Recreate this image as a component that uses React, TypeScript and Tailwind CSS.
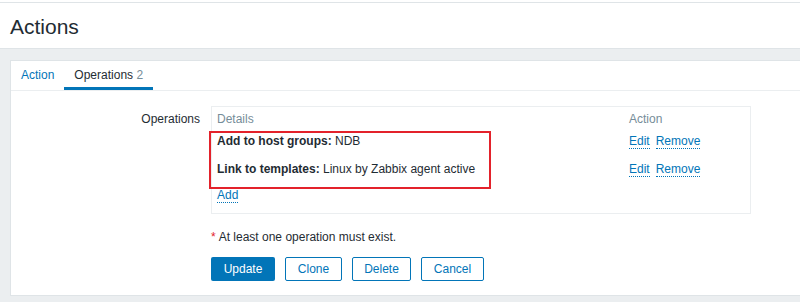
import React from "react";

const link = "text-[#0275b8] border-b border-dotted border-[#0275b8] leading-[14px] cursor-pointer";

function OpRow({ label, value, h }: { label: string; value: string; h: string }) {
  return (
    <div className={`flex items-center ${h}`}>
      <div className="w-[412px] shrink-0">
        <span className="font-bold">{label}:</span> {value}
      </div>
      <div className="flex gap-[6px]">
        <span className={link}>Edit</span>
        <span className={link}>Remove</span>
      </div>
    </div>
  );
}

export default function App() {
  return (
    <div
      className="w-[800px] h-[302px] overflow-hidden bg-[#ebeef0] text-[12px] text-[#1f2c33]"
      style={{ fontFamily: '"Liberation Sans", Arial, sans-serif' }}
    >
      <div className="h-[2px] bg-white" />
      <header className="h-[47px] bg-white border-t border-b border-[#dfe4e7] flex items-center pl-[10px]">
        <h1 className="text-[21px] leading-none text-[#1f2c33] font-normal mt-[1px]">Actions</h1>
      </header>
      <div className="ml-[10px] mt-[11px] w-[800px] h-[236px] bg-white border border-[#dfe4e7]">
        <div className="flex h-[30px] border-b border-[#ebeef0]">
          <div className="px-[10px] flex items-center text-[#0275b8] pb-[2px]">Action</div>
          <div className="px-[10px] flex items-center border-b-[3px] border-[#0275b8] pt-[1px]">
            Operations&nbsp;<span className="text-[#768d99]">2</span>
          </div>
        </div>
        <div className="flex mt-[15px]">
          <div className="w-[189px] shrink-0 text-right pt-[4px]">Operations</div>
          <div className="ml-[11px]">
            <div className="relative w-[540px] border border-[#ebeef0] pl-[5px] pt-[2px] pb-[8px]">
              <div className="flex items-center h-[20px] text-[#768d99]">
                <div className="w-[412px] shrink-0">Details</div>
                <div>Action</div>
              </div>
              <OpRow label="Add to host groups" value="NDB" h="h-[24px]" />
              <OpRow label="Link to templates" value="Linux by Zabbix agent active" h="h-[32px]" />
              <div className="flex items-center h-[20px]">
                <span className={link}>Add</span>
              </div>
              <div className="absolute left-[-3px] top-[24px] w-[282px] h-[58px] border-2 border-[#e3222b]" />
            </div>
            <div className="mt-[16px] flex items-center h-[14px]">
              <span className="text-[#e3222b] mr-[3px]">*</span>
              <span>At least one operation must exist.</span>
            </div>
            <div className="mt-[13px] flex gap-[10px]">
              <button className="w-[64px] h-[24px] bg-[#0275b8] text-white rounded-[2px] text-[12px]">Update</button>
              <button className="w-[57px] h-[24px] bg-white text-[#0275b8] border border-[#0275b8] rounded-[2px] text-[12px]">Clone</button>
              <button className="w-[59px] h-[24px] bg-white text-[#0275b8] border border-[#0275b8] rounded-[2px] text-[12px]">Delete</button>
              <button className="w-[63px] h-[24px] bg-white text-[#0275b8] border border-[#0275b8] rounded-[2px] text-[12px]">Cancel</button>
            </div>
          </div>
        </div>
      </div>
    </div>
  );
}
